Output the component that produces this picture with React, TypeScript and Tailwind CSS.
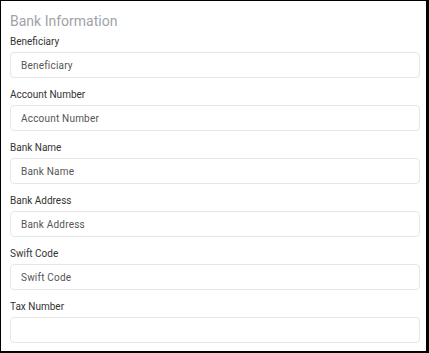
const fields = [
  { label: "Beneficiary", placeholder: "Beneficiary" },
  { label: "Account Number", placeholder: "Account Number" },
  { label: "Bank Name", placeholder: "Bank Name" },
  { label: "Bank Address", placeholder: "Bank Address" },
  { label: "Swift Code", placeholder: "Swift Code" },
  { label: "Tax Number", placeholder: "" },
];

export default function App() {
  return (
    <div
      className="w-[429px] h-[353px] overflow-hidden bg-white border-t border-l border-r-[3px] border-b-[2px] border-black pl-[9px] pr-[6px] pt-[10px]"
      style={{ fontFamily: "Roboto, 'Noto Sans', sans-serif" }}
    >
      <h2 className="text-[14px] leading-[20px] text-[#9ea3a8] mb-[4px]">Bank Information</h2>
      {fields.map((f) => (
        <div key={f.label} className="mb-[10px]">
          <label className="block text-[10px] leading-[14px] text-[#333] mb-[3px]">{f.label}</label>
          <input
            type="text"
            placeholder={f.placeholder}
            className="block w-full h-[26px] rounded-[4px] border border-[#e6e6e6] bg-white px-[10px] text-[10px] tracking-[0.2px] text-[#444] placeholder:text-[#555] outline-none"
          />
        </div>
      ))}
    </div>
  );
}
